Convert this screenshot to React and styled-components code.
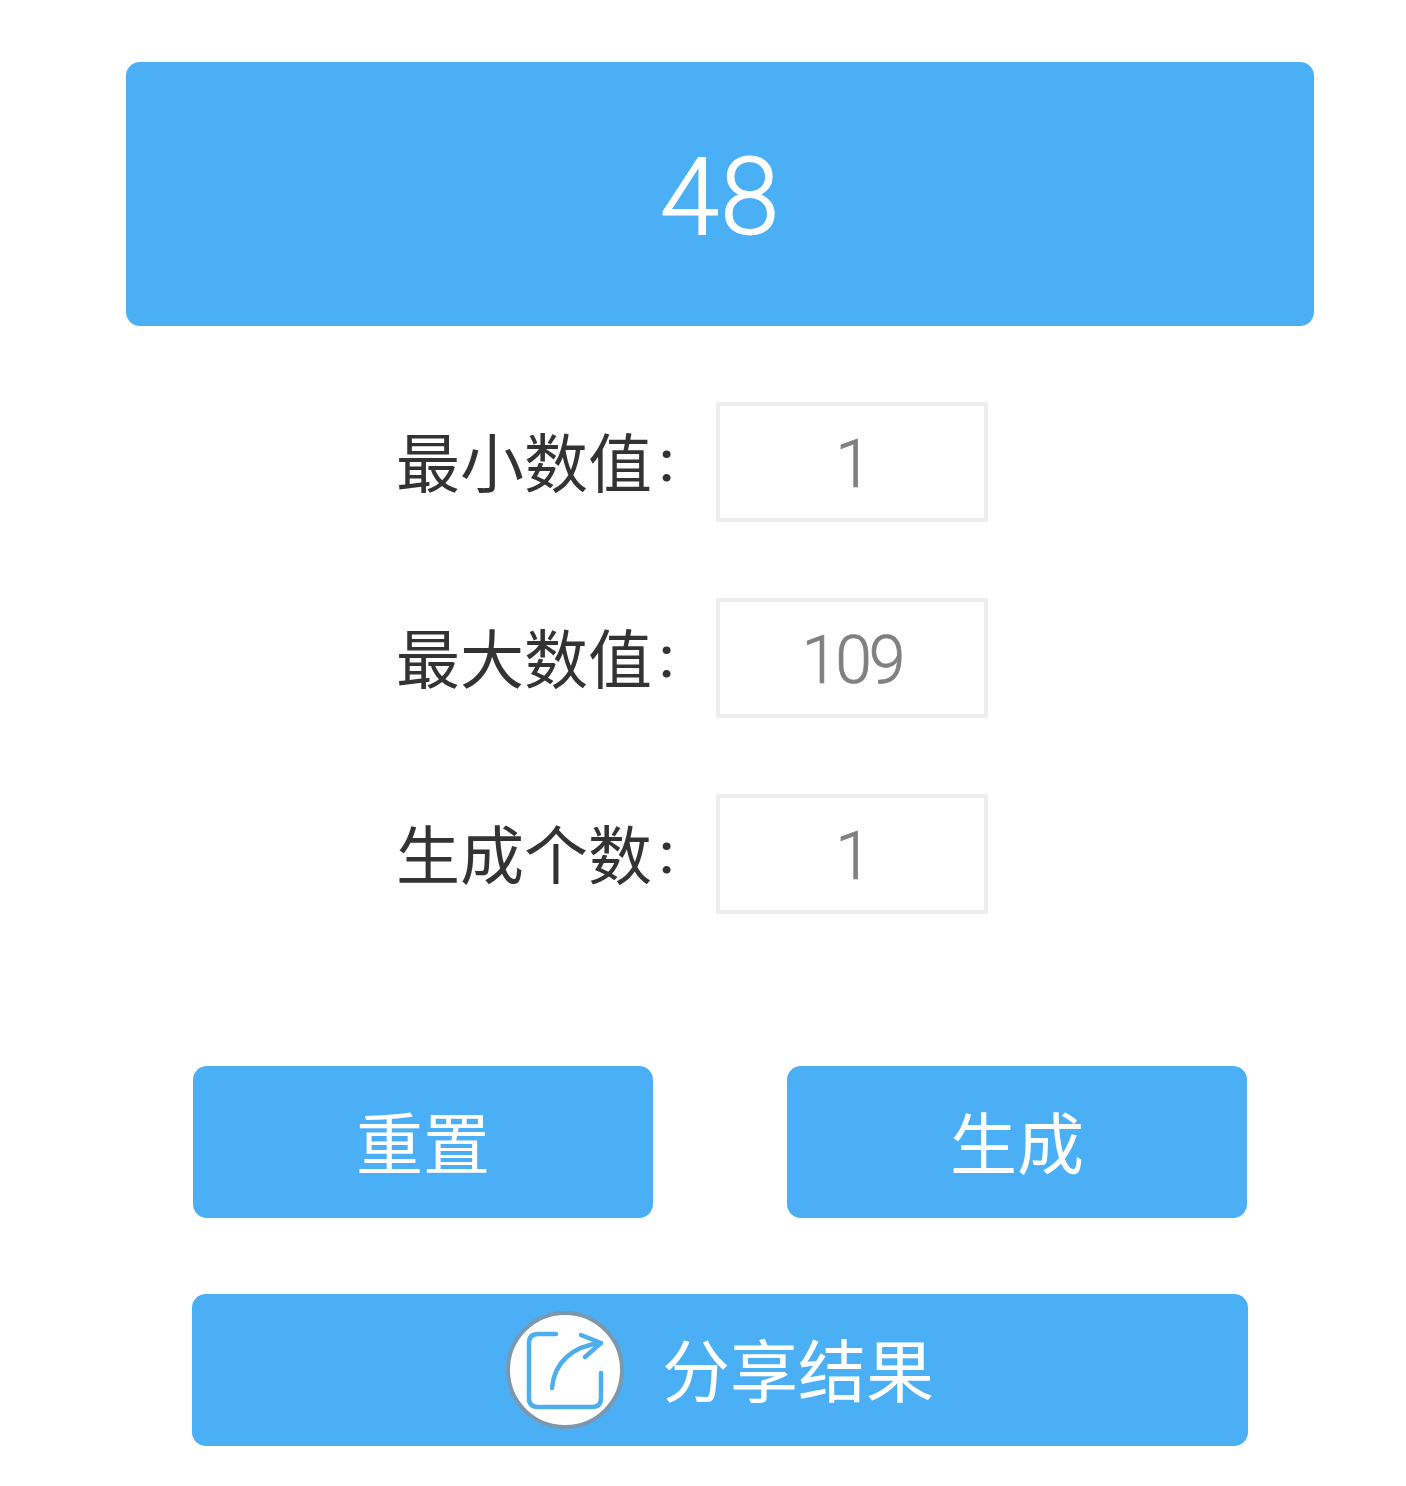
import React from "react";
import styled, { createGlobalStyle } from "styled-components";

const Global = createGlobalStyle`
  html, body { margin: 0; padding: 0; background: #fff; }
  body { font-family: Roboto, "Noto Sans CJK SC", sans-serif; }
`;

const Page = styled.main`
  width: 1406px;
  height: 1486px;
  padding-top: 62px;
  box-sizing: border-box;
  display: flex;
  flex-direction: column;
  align-items: center;
  overflow: hidden;
`;

const Column = styled.div`
  width: 1188px;
  margin-left: 34px;
  display: flex;
  flex-direction: column;
  align-items: center;
`;

const Result = styled.div`
  width: 100%;
  height: 264px;
  padding-top: 6px;
  box-sizing: border-box;
  background: #4baff6;
  border-radius: 14px;
  color: #fff;
  font-size: 107px;
  font-weight: 300;
  letter-spacing: 1px;
  -webkit-text-stroke: 1.2px #fff;
  display: flex;
  align-items: center;
  justify-content: center;
`;

const Form = styled.div`
  margin-top: 76px;
  margin-right: 54px;
  display: flex;
  flex-direction: column;
  gap: 76px;
`;

const Row = styled.div`
  display: flex;
  align-items: center;
`;

const Label = styled.div`
  width: 320px;
  height: 120px;
  margin-left: -2px;
  font-family: "Noto Sans CJK SC", sans-serif;
  font-size: 64px;
  line-height: 114px;
  color: #333;
  white-space: nowrap;
  font-weight: 400;
  display: flex;
`;

const Colon = styled.span`
  font-family: Roboto, sans-serif;
  font-size: 58px;
  font-weight: 500;
  margin-left: 7px;
  line-height: 118px;
`;

const Field = styled.div`
  width: 272px;
  height: 120px;
  padding-top: 4px;
  box-sizing: border-box;
  border: 4px solid #eeeeee;
  display: flex;
  align-items: center;
  justify-content: center;
  color: #808080;
  font-size: 66px;
  font-weight: 300;
  letter-spacing: -3px;
  -webkit-text-stroke: 0.7px #808080;
`;

const Actions = styled.div`
  margin-top: 152px;
  display: flex;
  gap: 134px;
`;

const Button = styled.button`
  width: 460px;
  height: 152px;
  border: 0;
  padding: 0 0 6px;
  background: #4baff6;
  border-radius: 14px;
  color: #fff;
  font-family: "Noto Sans CJK SC", sans-serif;
  font-size: 67px;
  font-weight: 400;
  display: flex;
  align-items: center;
  justify-content: center;
`;

const ShareButton = styled(Button)`
  width: 1056px;
  margin-top: 76px;
  gap: 38px;
  font-size: 68px;
`;

const IconCircle = styled.span`
  width: 118px;
  height: 118px;
  margin-top: 6px;
  flex: none;
  box-sizing: border-box;
  border: 4px solid #7b98ae;
  border-radius: 50%;
  background: #fff;
  display: flex;
  align-items: center;
  justify-content: center;
`;

const IconSvg = styled.svg`
  flex: none;
`;

const ShareIcon = () => (
  <IconSvg width="118" height="118" viewBox="0 0 118 118" fill="none" stroke="#4eaeec" strokeWidth="4.5" strokeLinecap="round" strokeLinejoin="round">
    <path d="M50 23 H32 Q23 23 23 32 V87 Q23 96 32 96 H86 Q95 96 95 87 V62" />
    <path d="M46 77 C48 52 66 35 95 32" />
    <path d="M75 24 L95 32 L79 46" />
  </IconSvg>
);

export default function App() {
  return (
    <Page>
      <Global />
      <Column>
        <Result>48</Result>
        <Form>
          <Row>
            <Label>最小数值<Colon>:</Colon></Label>
            <Field>1</Field>
          </Row>
          <Row>
            <Label>最大数值<Colon>:</Colon></Label>
            <Field>109</Field>
          </Row>
          <Row>
            <Label>生成个数<Colon>:</Colon></Label>
            <Field>1</Field>
          </Row>
        </Form>
        <Actions>
          <Button>重置</Button>
          <Button>生成</Button>
        </Actions>
        <ShareButton>
          <IconCircle><ShareIcon /></IconCircle>
          分享结果
        </ShareButton>
      </Column>
    </Page>
  );
}
